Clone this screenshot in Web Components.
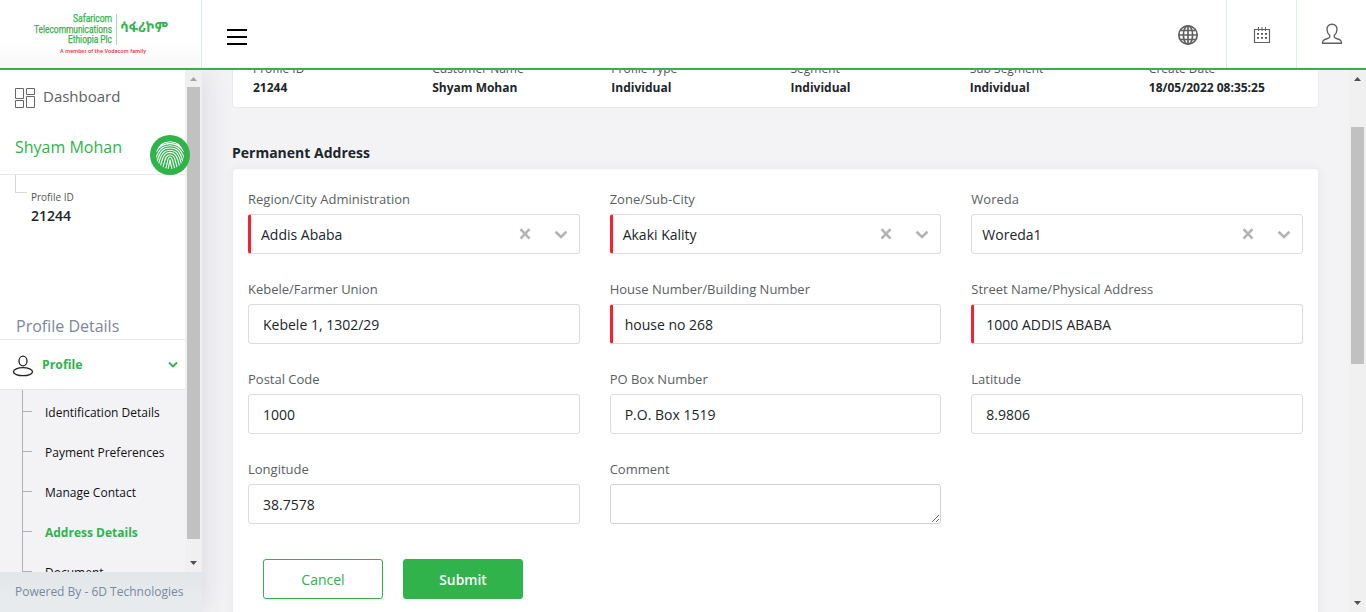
<!DOCTYPE html>
<html lang="en">
<head>
<meta charset="utf-8">
<title>Address Details</title>
<style>
html,body{margin:0;height:100%;overflow:hidden}
body{font-family:"Open Sans","Noto Sans",sans-serif;background:#f3f3f6;color:#212529;font-size:13px}
</style>
</head>
<body>
<app-shell></app-shell>
<script>
function define(name, html) {
  const t = document.createElement('template');
  t.innerHTML = html;
  customElements.define(name, class extends HTMLElement {
    constructor() {
      super();
      this.attachShadow({mode: 'open'}).appendChild(t.content.cloneNode(true));
    }
  });
}

define('scroll-bar', `
<style>
:host{display:flex;flex-direction:column;width:17px;background:#f0f0f0;flex:none}
.b{height:17px;flex:none;display:block}
.track{flex:1;padding-top:var(--start,0px)}
.thumb{width:13px;height:var(--thumb);background:#c1c1c1;margin:0 auto}
</style>
<svg class="b" width="17" height="17"><path d="M5 11L8.500 7L12 11Z" fill="var(--up,#505050)"/></svg>
<div class="track"><div class="thumb"></div></div>
<svg class="b" width="17" height="17"><path d="M5 6L8.500 10L12 6Z" fill="#505050"/></svg>`);

define('brand-logo', `
<style>:host{display:block;width:201px;height:68px}svg{display:block}</style>
<svg width="201" height="68" viewBox="0 0 201 68">
<defs><linearGradient id="g" x2="0" y2="1"><stop offset=".6" stop-color="#fff"/><stop offset="1" stop-color="#f8f8f8"/></linearGradient></defs>
<rect width="201" height="68" fill="url(#g)"/>
<g fill="#2fb34a" stroke="#2fb34a" stroke-width=".25" font-family="Roboto,sans-serif" font-size="10.500" text-anchor="end">
<text x="112" y="22" textLength="39" lengthAdjust="spacingAndGlyphs">Safaricom</text>
<text x="112" y="32.500" textLength="78" lengthAdjust="spacingAndGlyphs">Telecommunications</text>
<text x="112" y="43" textLength="44" lengthAdjust="spacingAndGlyphs">Ethiopia Plc</text></g>
<rect x="116" y="14" width="1" height="31" fill="#a5dbb0"/>
<text x="120" y="32" fill="#2fb34a" font-family="'Open Sans','Noto Sans Ethiopic',sans-serif" font-weight="700" font-size="14" textLength="48" lengthAdjust="spacingAndGlyphs">ሳፋሪኮም</text>
<text x="60" y="53" fill="#e8343c" font-family="Roboto,sans-serif" font-weight="500" font-size="5.500" textLength="86" lengthAdjust="spacing">A member of the Vodacom family</text>
</svg>`);

define('app-header', `
<style>
:host{display:flex;height:68px;border-bottom:2px solid #2fb34a;background:#fff;flex:none;position:relative;z-index:2}
.logo{border-right:1px solid #d5f0dc}
.menu{padding:28px 0 0 25px;flex:1}
.cell{width:69px;border-left:1px solid #d5f0dc;display:flex;align-items:center;justify-content:center}
.cell.first{width:76px;border:0}
svg{display:block}
</style>
<brand-logo class="logo"></brand-logo>
<div class="menu"><svg width="20" height="18"><path d="M0 2H20M0 9H20M0 16H20" stroke="#000" stroke-width="2"/></svg></div>
<div class="cell first"><svg width="22" height="22" viewBox="0 0 22 22" fill="none" stroke="#606060" stroke-width="1.700" style="margin-top:2px"><circle cx="11" cy="11" r="9.200"/><ellipse cx="11" cy="11" rx="4.600" ry="9.200"/><path d="M11 2V20M2 11H20M3.500 6.500H18.500M3.500 15.500H18.500"/></svg></div>
<div class="cell"><svg width="18" height="18" viewBox="0 0 18 18" style="margin-top:2px"><path d="M1.500 3.500H16.500V16.500H1.500Z" fill="none" stroke="#606060" stroke-width="1.200"/><path d="M5.500 1V5M9 1V5M12.500 1V5" stroke="#606060"/><path d="M4 7.900H15M4 11.900H15" stroke="#555" stroke-width="1.800" stroke-dasharray="2 2"/></svg></div>
<div class="cell"><svg width="22" height="22" viewBox="0 0 22 22" fill="none" stroke="#606060" stroke-width="1.400"><path d="M11 1.200C7.800 1.200 5.800 3.300 6 6.500C6.100 8.700 7 10.900 8.700 12.500V14.100C8.500 15.300 3.800 16.200 2.500 17.200C1.600 17.900 1.500 19 1.600 20.200H20.400C20.500 19 20.400 17.900 19.500 17.200C18.200 16.200 13.500 15.300 13.300 14.100V12.500C15 10.900 15.900 8.700 16 6.500C16.200 3.300 14.200 1.200 11 1.200Z"/></svg></div>`);

define('sub-item', `
<style>
:host{display:flex;align-items:center;height:40px;position:relative;font-size:12px;color:#111;padding-left:45px;box-sizing:border-box;padding-top:5px;white-space:nowrap}
:host([active]){color:#2fb34a;font-weight:700}
i{position:absolute;left:22px;top:-18px;width:10px;height:40px;box-sizing:border-box;border:solid #b0b0b4;border-width:0 0 1px 1px}
:host([first]) i{top:0;height:22px}
</style><i></i><slot></slot>`);

define('fingerprint-badge', `
<style>:host{display:block;width:40px;height:40px}svg{display:block}</style>
<svg width="40" height="40" viewBox="0 0 40 40"><circle cx="20" cy="20" r="20" fill="#2fb34a"/>
<defs><clipPath id="c"><circle cx="20" cy="20" r="14"/></clipPath></defs>
<g clip-path="url(#c)" fill="none" stroke="#fff" stroke-width="1.100">
<path d="M10 10Q20 3.500 30 10M7 13Q20 4 33 13M6 17Q11 8.500 20 8.700T34 17"/>
<path d="M5.500 24C9 13 14 10.800 20 10.800S31 13 34.500 24M7 27C10 15 14 13 20 13S30 15 33 27M8.500 29C11.500 17 15 15.200 20 15.200S28.500 17 31.500 29M10.500 31C13 20 15.500 17.400 20 17.400S27 20 29.500 31"/>
<path d="M12.500 33C15 28 14.500 19.700 20 19.700S25 27 27.500 33M15.500 34C18 28 17 22 20 22S22.500 28 25 34M18 34C19.500 29 19.500 27 20 24.500C20.500 27 20.500 29 22 34"/>
</g>
</svg>`);

define('side-bar', `
<style>
:host{display:flex;flex-direction:column;width:202px;flex:none;box-shadow:0 0 28px rgba(60,60,75,.15);position:relative;z-index:1;background:#fff}
.scroll{height:502px;display:flex}
.content{width:185px;overflow:hidden;height:502px}
.dash{display:flex;align-items:center;gap:8px;height:53px;padding-left:15px;font-size:15px;color:#5c6066}
.dash svg{margin-top:3px}
.dash span{margin-top:-1px}
.user{height:51px;border-bottom:1px solid #e8e8e8;padding-left:15px;color:#2fb34a;font-size:16px;line-height:49px}
.pid{height:134px;display:flex;padding-left:15px}
.elbow{width:11px;height:17px;border-left:1px solid #d8d8d8;border-bottom:1px solid #d8d8d8;margin-right:4px}
.pl{font-size:10px;line-height:14px;padding-top:15px;color:#555}
.pv{font-size:14px;line-height:18px;font-weight:600;color:#212529;padding-top:3px}
.title{height:30px;border-bottom:1px solid #e8e8e8;font-size:16px;line-height:34px;padding-left:16px;color:#80859a}
.profile{height:49px;border-bottom:1px solid #e4e4e6;display:flex;align-items:center;padding:0 7px 0 12px;font-size:12.300px;font-weight:700;color:#2fb34a;gap:8px}
.profile svg:first-child{margin-top:2px}
.profile svg:last-child{margin-left:auto}
nav{background:#f3f3f6;height:200px}
.foot{height:40px;background:linear-gradient(#e2e6e9,#e7ebee 60%);font-size:12px;line-height:39px;padding-left:15px;color:#78899c}
scroll-bar{--thumb:452px;--up:#a3a3a3;height:502px}
fingerprint-badge{position:absolute;left:150px;top:65px}
</style>
<div class="scroll"><div class="content">
<div class="dash"><svg width="20" height="20" viewBox="0 0 20 20" fill="none" stroke="#666"><path d="M.5.500H8.500V10.500H.5ZM11.500.500H19.500V6.500H11.500ZM.5 12.500H8.500V19.500H.5ZM11.500 8.500H19.500V19.500H11.500Z"/></svg><span>Dashboard</span></div>
<div class="user">Shyam Mohan</div>
<div class="pid"><div class="elbow"></div><div><div class="pl">Profile ID</div><div class="pv">21244</div></div></div>
<div class="title">Profile Details</div>
<div class="profile"><svg width="22" height="22" viewBox="0 0 22 22" fill="none" stroke="#222" stroke-width="1.300"><ellipse cx="11" cy="6" rx="4" ry="4.800"/><ellipse cx="11" cy="16.700" rx="9.500" ry="4"/></svg><span>Profile</span><svg width="10" height="8"><path d="M1 1.500L5 5.500L9 1.500" fill="none" stroke="#2fb34a" stroke-width="1.800"/></svg></div>
<nav><sub-item first>Identification Details</sub-item><sub-item>Payment Preferences</sub-item><sub-item>Manage Contact</sub-item><sub-item active>Address Details</sub-item><sub-item>Document</sub-item></nav>
</div><scroll-bar></scroll-bar></div>
<div class="foot">Powered By - 6D Technologies</div>
<fingerprint-badge></fingerprint-badge>`);

define('info-item', `
<style>:host{display:block}.l{font-size:12px;line-height:16px;color:#555}.v{font-size:12px;line-height:17px;font-weight:700;color:#212529;padding-top:2px}</style>
<div class="l"><slot name="label"></slot></div><div class="v"><slot></slot></div>`);

define('form-field', `
<style>
:host{display:block;height:90px}
.label{font-size:13px;line-height:18px;padding:2px 0 6px;height:18px;color:#5a5e62;white-space:nowrap}
.box{height:40px;box-sizing:border-box;border:1px solid #dcdcdf;border-radius:3px;background:#fff;font-size:14px;padding:0 12px 0 14px;display:flex;align-items:center;color:#212529}
:host([required]) .box{border-left:3px solid #f5222d;padding-left:12px}
:host([select]) .box{padding-left:10px}
.ic{display:none;margin-left:auto}
:host([select]) .ic{display:block}
textarea{display:none;width:100%;height:40px;box-sizing:border-box;border:1px solid #ced0da;border-radius:3px;margin:0;background:#fff}
:host([area]) .box{display:none}:host([area]) textarea{display:block}
</style>
<div class="label"><slot name="label"></slot></div>
<div class="box"><slot></slot><svg class="ic" width="48" height="12" viewBox="0 0 48 12" fill="none" stroke="#b4b4b4" stroke-width="2.600"><path d="M1.500 1.200L10.500 10.700M10.500 1.200L1.500 10.700M36.500 3.700L42 8.900L47.500 3.700"/></svg></div>
<textarea></textarea>`);

define('action-button', `
<style>:host{display:flex;align-items:center;justify-content:center;width:120px;height:40px;box-sizing:border-box;border:1px solid #2fb34a;border-radius:3px;color:#2fb34a;font-size:14px}
:host([primary]){background:#2fb34a;color:#fff;font-weight:600;font-size:13.800px}</style><slot></slot>`);

define('address-page', `
<style>
:host{display:block;flex:1;height:542px;overflow:hidden;background:#f3f3f6;padding-left:30px;box-sizing:border-box}
.info{width:1087px;box-sizing:border-box;height:38px;background:#fff;border:1px solid #e9e9ee;border-top:0;border-radius:0 0 4px 4px;overflow:hidden}
.grid{display:grid;grid-template-columns:repeat(6,1fr);width:1075px;padding-left:20px;margin-top:-9px}
h2{margin:0;font-size:14px;line-height:20px;font-weight:700;padding:35px 0 5px;color:#212529}
.card{width:1087px;box-sizing:border-box;height:520px;background:#fff;border:1px solid #ebebf0;border-radius:4px;box-shadow:0 0 10px rgba(60,60,90,.06);padding:19px 15px 0 15px}
.form{display:grid;grid-template-columns:repeat(3,1fr);column-gap:30px}
.actions{display:flex;gap:20px;padding:11px 0 0 15px}
</style>
<div class="info"><div class="grid">
<info-item><span slot="label">Profile ID</span>21244</info-item>
<info-item><span slot="label">Customer Name</span>Shyam Mohan</info-item>
<info-item><span slot="label">Profile Type</span>Individual</info-item>
<info-item><span slot="label">Segment</span>Individual</info-item>
<info-item><span slot="label">Sub Segment</span>Individual</info-item>
<info-item><span slot="label">Create Date</span>18/05/2022 08:35:25</info-item>
</div></div>
<h2>Permanent Address</h2>
<div class="card"><div class="form">
<form-field select required><span slot="label">Region/City Administration</span>Addis Ababa</form-field>
<form-field select required><span slot="label">Zone/Sub-City</span>Akaki Kality</form-field>
<form-field select><span slot="label">Woreda</span>Woreda1</form-field>
<form-field><span slot="label">Kebele/Farmer Union</span>Kebele 1, 1302/29</form-field>
<form-field required><span slot="label">House Number/Building Number</span>house no 268</form-field>
<form-field required><span slot="label">Street Name/Physical Address</span>1000 ADDIS ABABA</form-field>
<form-field><span slot="label">Postal Code</span>1000</form-field>
<form-field><span slot="label">PO Box Number</span>P.O. Box 1519</form-field>
<form-field><span slot="label">Latitude</span>8.9806</form-field>
<form-field><span slot="label">Longitude</span>38.7578</form-field>
<form-field area><span slot="label">Comment</span></form-field>
</div><div class="actions"><action-button>Cancel</action-button><action-button primary>Submit</action-button></div></div>`);

define('app-shell', `
<style>:host{display:flex;flex-direction:column;width:1366px;height:612px;overflow:hidden}
.body{display:flex;height:542px}
.page-bar{--start:40px;--thumb:237px}</style>
<app-header></app-header>
<div class="body"><side-bar></side-bar><address-page></address-page><scroll-bar class="page-bar"></scroll-bar></div>`);
</script>
</body>
</html>
